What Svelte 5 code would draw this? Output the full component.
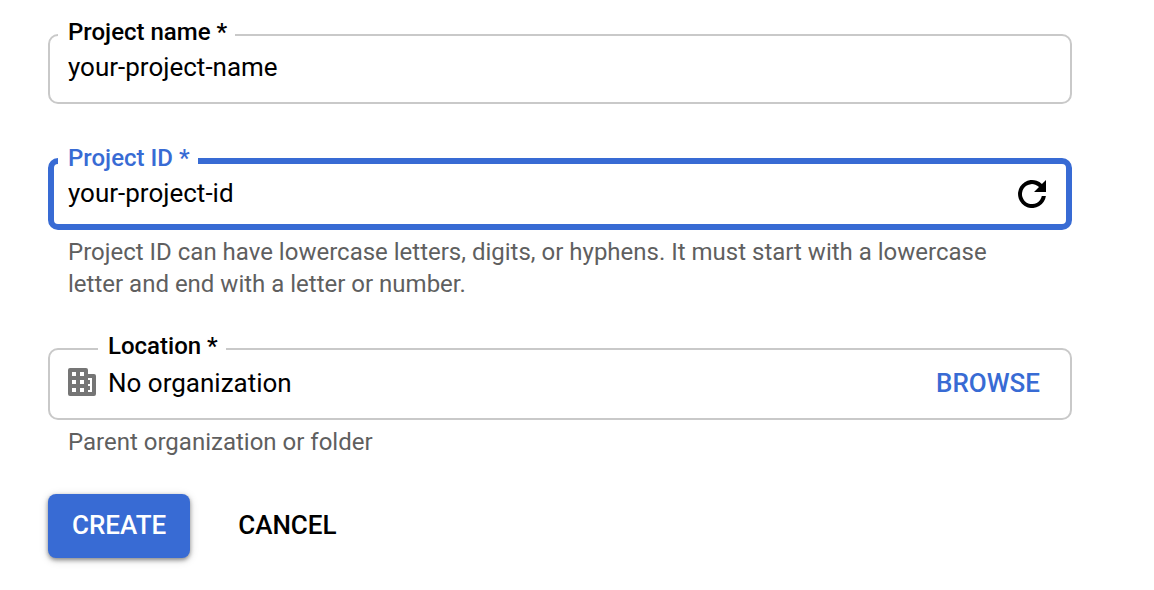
<script lang="ts">
  let projectName = $state('your-project-name');
  let projectId = $state('your-project-id');
  let location = $state('No organization');
</script>

<form class="form" onsubmit={(e) => e.preventDefault()}>
  <div class="field">
    <div class="box">
      <label for="project-name">Project name *</label>
      <input id="project-name" type="text" bind:value={projectName} />
    </div>
  </div>

  <div class="field">
    <div class="box active">
      <label for="project-id">Project ID *</label>
      <input id="project-id" type="text" aria-describedby="id-hint" bind:value={projectId} />
      <button class="icon-button" type="button" aria-label="Refresh">
        <svg width="28" height="28" viewBox="0 0 28 28" aria-hidden="true">
          <path d="M23.9 4.1A14 14 0 1 0 27.9 16H23.8A10 10 0 1 1 21 7L16 12H28V0Z" />
        </svg>
      </button>
    </div>
    <p id="id-hint">Project ID can have lowercase letters, digits, or hyphens. It must start with a lowercase letter and end with a letter or number.</p>
  </div>

  <div class="field">
    <div class="box with-icon">
      <svg class="building" width="28" height="28" viewBox="0 0 28 28" aria-hidden="true">
        <path fill-rule="evenodd" d="M2 0H18Q20 0 20 2V6H26Q28 6 28 8V26Q28 28 26 28H2Q0 28 0 26V2Q0 0 2 0ZM4 4V8H8V4ZM12 4V8H16V4ZM4 12V16H8V12ZM12 12V16H16V12ZM4 20V24H8V20ZM12 20V24H16V20ZM20 10V12H22V16H20V18H22V22H20V24H24V10Z" />
      </svg>
      <label for="location">Location *</label>
      <input id="location" type="text" aria-describedby="location-hint" bind:value={location} />
      <button class="browse" type="button">BROWSE</button>
    </div>
    <p id="location-hint">Parent organization or folder</p>
  </div>

  <div class="actions">
    <button class="create" type="submit">CREATE</button>
    <button class="cancel" type="button">CANCEL</button>
  </div>
</form>

<style>
  :global(body) {
    margin: 0;
    background: #fff;
  }

  .form {
    box-sizing: border-box;
    padding: 34px 82px 32px 48px;
    font-family: Roboto, sans-serif;
    color: #000;
  }

  .field {
    margin-bottom: 48px;
  }

  .field:first-child {
    margin-bottom: 54px;
  }

  .box {
    position: relative;
    display: flex;
    align-items: center;
    box-sizing: border-box;
    height: 70px;
    padding: 0 30px 4px 18px;
    border: 2px solid #c9c9c9;
    border-radius: 10px;
  }

  .box.active {
    height: 72px;
    padding: 0 20px 0 14px;
    border: 6px solid #386bd4;
  }

  .box.with-icon {
    height: 72px;
    gap: 12px;
  }

  label {
    position: absolute;
    top: -20px;
    left: 8px;
    padding: 0 8px 0 10px;
    background: #fff;
    font-size: 24px;
    line-height: 32px;
    font-weight: 500;
  }

  .active label {
    top: -22px;
    left: 4px;
    color: #386bd4;
  }

  .with-icon label {
    left: 48px;
  }

  input {
    flex: 1;
    min-width: 0;
    padding: 0;
    border: 0;
    outline: 0;
    background: none;
    font: inherit;
    font-size: 26px;
    line-height: 32px;
    color: inherit;
  }

  .active input {
    padding-bottom: 2px;
  }

  button {
    padding: 0;
    border: 0;
    background: none;
    font: inherit;
    font-size: 26px;
    line-height: 32px;
    font-weight: 500;
    color: inherit;
    cursor: pointer;
  }

  .with-icon input,
  .with-icon button {
    padding-top: 2px;
  }

  svg {
    display: block;
  }

  .building {
    fill: #757575;
  }

  .browse {
    color: #386bd4;
  }

  p {
    margin: 6px 48px 0 20px;
    font-size: 24px;
    line-height: 32px;
    color: #5f5f5f;
  }

  .actions {
    display: flex;
    gap: 24px;
    margin-top: -12px;
  }

  .actions button {
    height: 64px;
    padding: 0 24px 2px;
    border-radius: 8px;
  }

  .actions .create {
    background: #386bd4;
    color: #fff;
    box-shadow: 0 2px 4px rgba(0, 0, 0, 0.4), 0 2px 10px rgba(0, 0, 0, 0.16);
  }
</style>
